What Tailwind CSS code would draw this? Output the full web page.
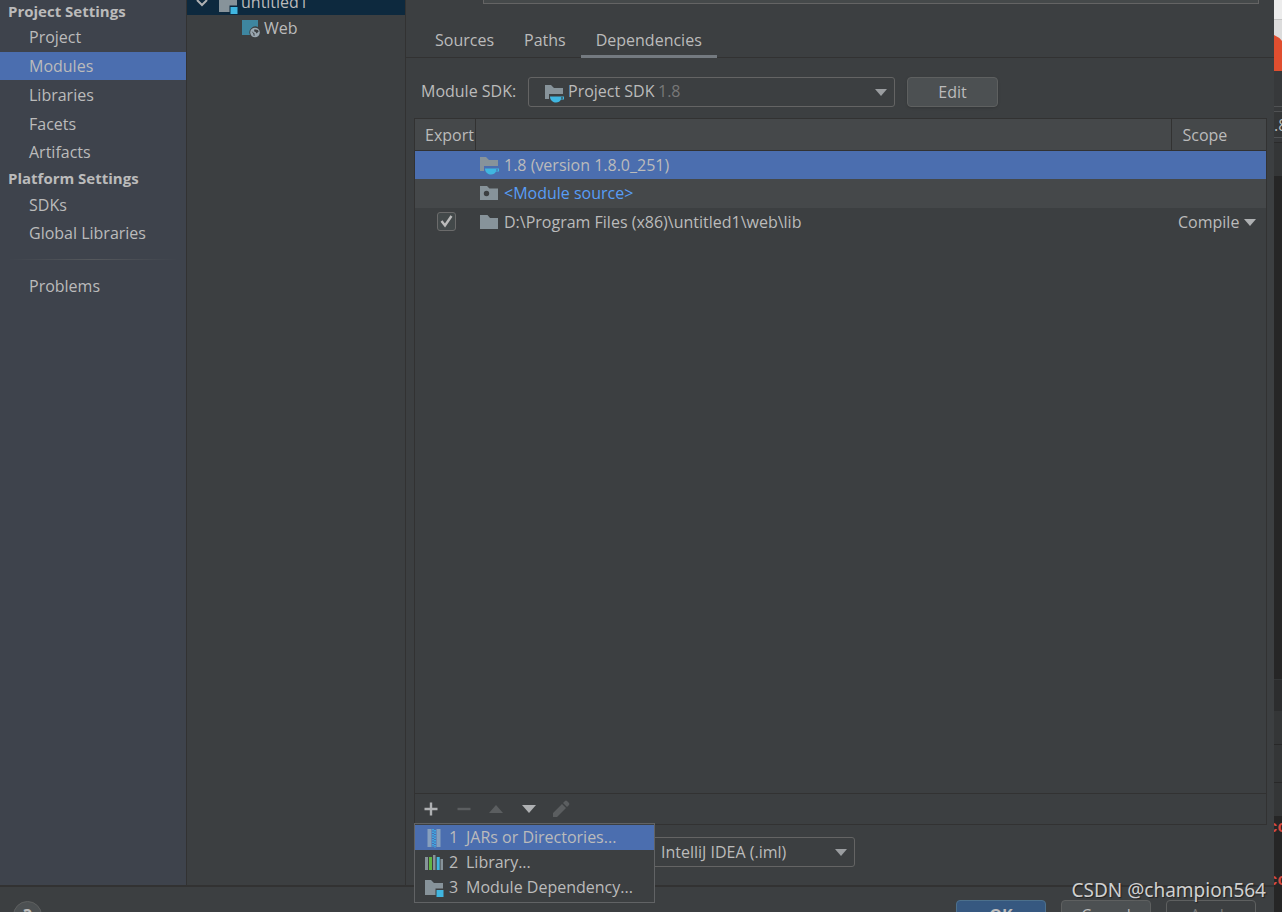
<!DOCTYPE html>
<html lang="en">
<head>
<meta charset="utf-8">
<title>Project Structure</title>
<script src="https://cdn.jsdelivr.net/npm/@tailwindcss/browser@4"></script>
</head>
<body class="flex h-screen overflow-hidden bg-[#3c3f41] font-['Open_Sans',sans-serif] text-base leading-5 text-[#bbbbbb]">

<svg class="hidden">
  <symbol id="folder" viewBox="0 0 20 20"><path d="M1 3h7.500l2.500 3h8v11H1z" fill="#87939a"/></symbol>
  <symbol id="sdk" viewBox="0 0 20 20">
    <path d="M1 2h6l3 3h9v6H5v5H1z" fill="#87939a"/>
    <path d="M6 13.500h14v3h-3c-1 2-2.500 3-5 3s-6-2-6-6zM17.200 14.300v1.400h1.600v-1.400z" fill="#40b6e0" fill-rule="evenodd"/>
  </symbol>
  <symbol id="module" viewBox="0 0 20 20">
    <path d="M1 2h6l3 3h9v5.500h-7.500V17H1z" fill="#87939a"/><path d="M12.500 12h7v7h-7z" fill="#40b6e0"/>
  </symbol>
  <symbol id="source" viewBox="0 0 20 20">
    <path d="M1 3h7l2.500 2.500H19V17H1z" fill="#87939a"/><circle cx="7.500" cy="10.500" r="2.700" fill="#3c3f41"/>
  </symbol>
  <symbol id="down" viewBox="0 0 12 7"><path d="M0 0h12L6 7z"/></symbol>
</svg>

<div class="flex min-w-0 flex-1 flex-col">
  <div class="flex min-h-0 flex-1">

    <nav class="w-[187px] shrink-0 border-r border-[#323232] bg-[#3e434c]">
      <h2 class="pl-2 text-[15px] font-bold leading-[22px]">Project Settings</h2>
      <a href="#" class="block pl-[29px] leading-[30px]">Project</a>
      <a href="#" class="block bg-[#4b6eaf] pl-[29px] leading-[28px]">Modules</a>
      <a href="#" class="block pl-[29px] leading-[30px]">Libraries</a>
      <a href="#" class="block pl-[29px] leading-[28px]">Facets</a>
      <a href="#" class="block pl-[29px] leading-[28px]">Artifacts</a>
      <h2 class="pl-2 text-[15px] font-bold leading-[25px]">Platform Settings</h2>
      <a href="#" class="block pl-[29px] leading-[28px]">SDKs</a>
      <a href="#" class="block pl-[29px] leading-[28px]">Global Libraries</a>
      <div class="mx-2 mt-3 h-px bg-linear-to-r from-transparent via-[#55585c] to-transparent"></div>
      <a href="#" class="mt-3 block pl-[29px] leading-[28px]">Problems</a>
    </nav>

    <aside class="w-[219px] shrink-0 border-r border-[#323232]">
      <div class="flex h-[15px] items-end bg-[#0d293e] pl-2">
        <svg class="mb-[6px] mr-2 size-[14px] shrink-0" viewBox="0 0 14 14" fill="none" stroke="#afb1b3" stroke-width="2"><path d="M2 5l5 5 5-5"/></svg>
        <svg class="ml-px size-5 shrink-0"><use href="#module"/></svg>
        <span class="ml-[3px] leading-[26px]">untitled1</span>
      </div>
      <div class="flex h-[26px] items-center pl-[54px]">
        <svg class="size-5 shrink-0" viewBox="0 0 20 20">
          <path d="M1 2h16v7a6 6 0 0 0-8 8H1z" fill="#3e86a0"/>
          <circle cx="14" cy="14.500" r="4.800" fill="#9aa7b0"/>
          <path d="M10.500 13l3 2.500v2.500l-1-.5v-1.500zM13.500 11.200l3.500.8.700 1.500-2.200 2-.8-1.500-1.700-.8z" fill="#3c3f41"/>
        </svg>
        <span class="ml-[3px] leading-6">Web</span>
      </div>
    </aside>

    <main class="flex min-w-0 flex-1 flex-col">
      <div class="ml-[77px] mr-[15px] h-1 shrink-0 border border-t-0 border-[#646464] bg-[#45494a]"></div>
      <div class="flex h-[54px] shrink-0 items-end border-b border-[#323232] pl-[14px]">
        <button class="h-[34px] px-[15px]">Sources</button>
        <button class="h-[34px] px-[15px]">Paths</button>
        <button class="-mb-px h-[35px] border-b-[3px] border-[#747a80] px-[15px] pt-[2px]">Dependencies</button>
      </div>

      <div class="mt-[19px] flex h-[30px] shrink-0 items-center pl-[15px]">
        <label for="sdkSelect" class="w-[107px] pb-[2px]">Module SDK:</label>
        <div class="relative h-[30px] w-[367px]">
          <select id="sdkSelect" class="h-full w-full appearance-none rounded-[3px] border border-[#646464] bg-[#3c3f41] pb-[2px] pl-[39px]"><option>Project SDK</option></select>
          <svg class="pointer-events-none absolute left-4 top-[6px] size-5"><use href="#sdk"/></svg>
          <span class="pointer-events-none absolute left-[130px] top-1 text-[#787878]">1.8</span>
          <svg class="pointer-events-none absolute right-2 top-3 h-[7px] w-3 fill-[#9a9da0]"><use href="#down"/></svg>
        </div>
        <button class="ml-3 h-[30px] w-[91px] rounded border border-[#5e6060] bg-[#4c5052] shadow-sm">Edit</button>
      </div>

      <section class="ml-2 mr-[7px] mt-[11px] flex min-h-0 flex-1 flex-col border border-[#323232]">
        <table class="w-full table-fixed border-collapse text-left">
          <colgroup><col class="w-[60px]"><col><col class="w-[95px]"></colgroup>
          <thead>
            <tr class="h-[31px] border-b border-[#323232] bg-[#45484a]">
              <th class="border-r border-[#323232] pl-[10px] pt-[2px] font-normal">Export</th>
              <th class="border-r border-[#323232]"></th>
              <th class="pl-[11px] pt-[2px] font-normal">Scope</th>
            </tr>
          </thead>
          <tbody>
            <tr class="h-[29px] bg-[#4b6eaf]">
              <td></td>
              <td><div class="flex items-center gap-[5px] pl-1"><svg class="size-5"><use href="#sdk"/></svg>1.8 (version 1.8.0_251)</div></td>
              <td></td>
            </tr>
            <tr class="h-[29px] bg-[#45484a]">
              <td></td>
              <td><div class="flex items-center gap-[5px] pb-[2px] pl-1 text-[#589df6]"><svg class="size-5"><use href="#source"/></svg>&lt;Module source&gt;</div></td>
              <td></td>
            </tr>
            <tr class="h-[29px]">
              <td class="pb-[2px] pl-[22px]">
                <div class="relative size-[19px]">
                  <input type="checkbox" checked aria-label="Export library" class="block size-[19px] appearance-none rounded-[3px] border border-[#6b6b6b] bg-[#43494a]">
                  <svg class="pointer-events-none absolute left-0 top-0 size-[19px]" viewBox="0 0 19 19" fill="none" stroke="#bbbbbb" stroke-width="2.400"><path d="M4.500 9l3.500 4.500L14.500 4"/></svg>
                </div>
              </td>
              <td><div class="flex items-center gap-[5px] pb-[2px] pl-1"><svg class="size-5"><use href="#folder"/></svg>D:\Program Files (x86)\untitled1\web\lib</div></td>
              <td>
                <div class="relative pb-[2px] pl-[7px]">
                  <select aria-label="Scope" class="block w-full appearance-none bg-transparent"><option>Compile</option></select>
                  <svg class="pointer-events-none absolute right-[10px] top-[7px] h-[7px] w-3 fill-[#afb1b3]"><use href="#down"/></svg>
                </div>
              </td>
            </tr>
          </tbody>
        </table>

        <div class="relative mt-auto flex h-[31px] items-center gap-[13px] border-t border-[#323232] pl-[6px]">
          <button aria-label="Add"><svg class="size-5" viewBox="0 0 20 20"><path d="M3.500 10h13M10 3.500v13" stroke="#afb1b3" stroke-width="2.400"/></svg></button>
          <button aria-label="Remove" disabled><svg class="size-5" viewBox="0 0 20 20"><path d="M3.500 10h13" stroke="#5b5e60" stroke-width="2.400"/></svg></button>
          <button aria-label="Move up" disabled><svg class="size-5" viewBox="0 0 20 20"><path d="M2 14h14l-7-8z" fill="#5b5e60"/></svg></button>
          <button aria-label="Move down"><svg class="size-5" viewBox="0 0 20 20"><path d="M2 6h14l-7 8z" fill="#afb1b3"/></svg></button>
          <button aria-label="Edit entry" disabled><svg class="size-5" viewBox="0 0 20 20" fill="#5b5e60"><path d="M0 18v-4l9-9 4 4-9 9zM10 4l2-2q1-.8 2 0l2 2q.8 1 0 2l-2 2z"/></svg></button>

          <div role="menu" class="absolute -left-px top-[29px] z-10 w-[241px] border border-[#616365] bg-[#3c3f41] pb-[2px] pt-px">
            <button role="menuitem" class="flex h-[25px] w-full items-center bg-[#4b6eaf] pl-[9px]">
              <svg class="size-5" viewBox="0 0 20 20"><path d="M3.500 1h4v18h-4zM12.500 1h4v18h-4z" fill="#87a0bd"/><path d="M9 1v18M11 2v18" stroke="#40a6e0" stroke-width="2" stroke-dasharray="1.500 1"/></svg>
              <span class="ml-[5px] w-[17px] pb-px text-left">1</span><span class="pb-px">JARs or Directories...</span>
            </button>
            <button role="menuitem" class="flex h-[25px] w-full items-center pl-[9px]">
              <svg class="size-5" viewBox="0 0 20 20"><path d="M1 4h3v13H1zM9 2h2.500v15H9zM16.500 6h2.500v11h-2.500z" fill="#87939a"/><path d="M5 4h3v13H5z" fill="#62b543"/><path d="M12.700 4h3v13h-3z" fill="#40b6e0"/></svg>
              <span class="ml-[5px] w-[17px] pb-px text-left">2</span><span class="pb-px">Library...</span>
            </button>
            <button role="menuitem" class="flex h-[25px] w-full items-center pl-[9px]">
              <svg class="size-5"><use href="#module"/></svg>
              <span class="ml-[5px] w-[17px] pb-px text-left">3</span><span class="pb-px">Module Dependency...</span>
            </button>
          </div>
        </div>
      </section>

      <div class="mb-[18px] ml-[239px] mt-3 h-[30px] w-[210px] shrink-0">
        <div class="relative h-full">
          <select aria-label="Dependencies storage format" class="h-full w-full appearance-none rounded-[3px] border border-[#646464] bg-[#3c3f41] pl-[15px]"><option>IntelliJ IDEA (.iml)</option></select>
          <svg class="pointer-events-none absolute right-2 top-3 h-[7px] w-3 fill-[#9a9da0]"><use href="#down"/></svg>
        </div>
      </div>
    </main>
  </div>

  <footer class="flex h-[27px] shrink-0 items-start overflow-hidden border-t-2 border-[#323232] pl-[13px] pr-[18px]">
    <button aria-label="Help" class="mt-[14px] size-[29px] shrink-0 rounded-full border border-[#5e6060] bg-[#4c5052] text-[17px] font-bold leading-[26px]">?</button>
    <div class="ml-auto mt-[13px] flex gap-[15px]">
      <button class="h-[30px] w-[90px] rounded border border-[#4c708c] bg-[#365880] font-bold">OK</button>
      <button class="h-[30px] w-[90px] rounded border border-[#5e6060] bg-[#4c5052]">Cancel</button>
      <button disabled class="h-[30px] w-[90px] rounded border border-[#5e6060] text-[#777777]">Apply</button>
    </div>
  </footer>
</div>

<!-- Sliver of the editor window behind the dialog -->
<div class="flex w-2 shrink-0 flex-col overflow-hidden bg-[#262626]">
  <div class="h-5 shrink-0 border-b border-[#c4c4c4] bg-[#ececec]"></div>
  <svg class="h-[51px] w-2 shrink-0 bg-[#dcdcdc]" viewBox="0 0 8 51"><path d="M0 15q5 2 8 6v30H0z" fill="#e04e2f"/></svg>
  <div class="h-9 shrink-0 border-b border-[#505254] bg-[#37393b]"></div>
  <div class="h-1 shrink-0 bg-[#37393b]"></div>
  <div class="flex h-[27px] shrink-0 items-center border-y border-[#505254] bg-[#343637]">.8</div>
  <div class="h-[5px] shrink-0 border-b border-[#2b2b2b] bg-[#37393b]"></div>
  <div class="h-[33px] shrink-0 bg-[#343637]"></div>
  <div class="h-[504px] shrink-0 border-b border-[#333536]"></div>
  <div class="h-[31px] shrink-0 bg-[#2c2d2e]"></div>
  <div class="h-[34px] shrink-0 border-b border-[#282828] bg-[#343637]"></div>
  <div class="h-[38px] shrink-0 border-b border-[#282828] bg-[#343637]"></div>
  <div class="h-[33px] shrink-0 bg-[#343637]"></div>
  <div class="-ml-[6px] mt-[2px] shrink-0 font-['Liberation_Mono',monospace] font-bold leading-[20px] text-[#d5483f]">co</div>
  <div class="-ml-[6px] mt-[33px] shrink-0 font-['Liberation_Mono',monospace] font-bold leading-[20px] text-[#d5483f]">co</div>
</div>

<div class="absolute bottom-2 right-4 z-20 font-['Noto_Sans',sans-serif] text-[19px] leading-7 text-[#d0d0d0] [text-shadow:1px_1px_1px_#222222]">CSDN @champion564</div>
</body>
</html>
